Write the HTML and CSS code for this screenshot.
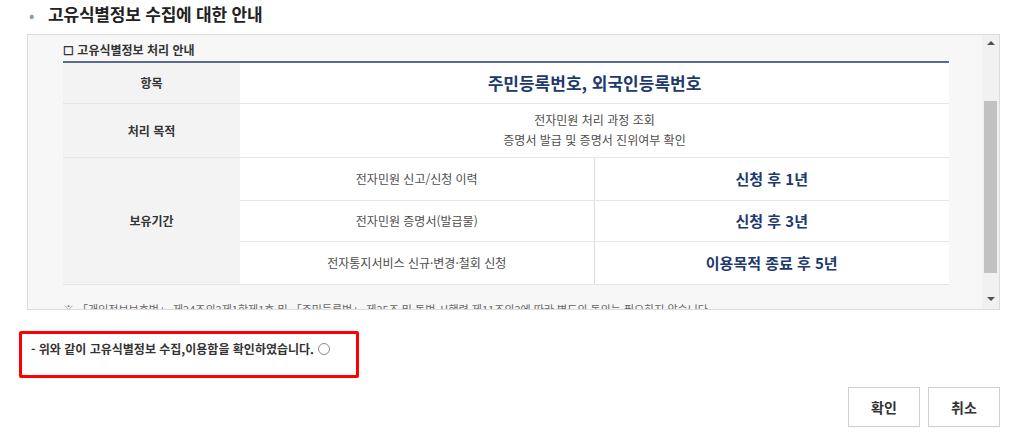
FILE: index.html
```html
<!DOCTYPE html>
<html lang="ko">
<head>
<meta charset="utf-8">
<title>고유식별정보 수집에 대한 안내</title>
<link rel="stylesheet" href="styles.css">
</head>
<body>
<div class="page">
  <h2 class="title"><span class="dot">•</span>고유식별정보 수집에 대한 안내</h2>

  <div class="box">
    <div class="box-content">
      <h3 class="sub">☐ 고유식별정보 처리 안내</h3>
      <table class="info">
        <colgroup>
          <col class="c1"><col class="c2"><col class="c3">
        </colgroup>
        <tr class="r1">
          <th>항목</th>
          <td colspan="2" class="strong big">주민등록번호, 외국인등록번호</td>
        </tr>
        <tr class="r2">
          <th>처리 목적</th>
          <td colspan="2" class="plain">전자민원 처리 과정 조회<br>증명서 발급 및 증명서 진위여부 확인</td>
        </tr>
        <tr class="r3">
          <th rowspan="3">보유기간</th>
          <td class="plain sep">전자민원 신고/신청 이력</td>
          <td class="strong">신청 후 1년</td>
        </tr>
        <tr class="r4">
          <td class="plain sep">전자민원 증명서(발급물)</td>
          <td class="strong">신청 후 3년</td>
        </tr>
        <tr class="r5">
          <td class="plain sep">전자통지서비스 신규·변경·철회 신청</td>
          <td class="strong">이용목적 종료 후 5년</td>
        </tr>
      </table>
      <p class="note">※ 「개인정보보호법」 제24조의2제1항제1호 및 「주민등록법」 제25조 및 동법 시행령 제11조의2에 따라 별도의 동의는 필요하지 않습니다.</p>
    </div>
    <div class="scrollbar">
      <span class="arrow up"></span>
      <span class="thumb"></span>
      <span class="arrow down"></span>
    </div>
  </div>

  <div class="confirm">
    <label class="confirm-label">- 위와 같이 고유식별정보 수집,이용함을 확인하였습니다. <span class="radio"></span></label>
  </div>

  <div class="buttons">
    <button class="btn">확인</button>
    <button class="btn">취소</button>
  </div>
</div>
</body>
</html>
```

FILE: styles.css
```css
* { box-sizing: border-box; }
html, body { margin: 0; padding: 0; background: #fff; }
body {
  font-family: "Noto Sans CJK KR", "Noto Sans", sans-serif;
  color: #333;
  width: 1024px;
  height: 435px;
  overflow: hidden;
}
.page { padding: 0; }

.title {
  margin: 0;
  padding: 2px 0 0 29px;
  height: 34px;
  font-size: 17px;
  font-weight: 700;
  line-height: 24px;
  color: #222;
  letter-spacing: -0.2px;
}
.title .dot {
  display: inline-block;
  width: 19px;
  color: #8a9bb8;
  font-size: 14px;
}

.box {
  margin-left: 27px;
  width: 973px;
  height: 276px;
  border: 1px solid #dcdcdc;
  background: #f7f7f7;
  display: flex;
}
.box-content {
  flex: 1;
  overflow: hidden;
  padding: 6px 33px 0 35px;
}
.sub {
  margin: 0;
  font-size: 12px;
  font-weight: 700;
  color: #333;
  line-height: 18px;
  height: 20px;
}
.info {
  width: 886px;
  border-collapse: collapse;
  table-layout: fixed;
  border-top: 2px solid #5b6b8c;
  border-bottom: 1px solid #c4c4c4;
}
.info col.c1 { width: 177px; }
.info col.c2 { width: 354px; }
.info col.c3 { width: 355px; }
.info th {
  background: #f3f3f3;
  font-size: 12px;
  font-weight: 700;
  color: #333;
  text-align: center;
  border-bottom: 1px solid #e6e6e6;
}
.info td {
  background: #fff;
  text-align: center;
  border-bottom: 1px solid #e6e6e6;
}
.info td.strong {
  font-size: 15px;
  font-weight: 700;
  color: #1d3a6f;
}
.info td.strong.big { font-size: 17px; }
.info td.plain {
  font-size: 12px;
  color: #4d4d4d;
  line-height: 20px;
}
.info td.sep { border-right: 1px solid #dedede; }
.info .r1 { height: 41px; }
.info .r2 { height: 54px; }
.info .r3 { height: 43px; }
.info .r4 { height: 41px; }
.info .r5 { height: 43px; }

.note {
  margin: 17px 0 0 0;
  font-size: 11px;
  color: #666;
  white-space: nowrap;
  line-height: 14px;
}

.scrollbar {
  width: 17px;
  background: #f1f1f1;
  display: flex;
  flex-direction: column;
  align-items: center;
}
.arrow {
  width: 0;
  height: 0;
  border-left: 4px solid transparent;
  border-right: 4px solid transparent;
}
.arrow.up {
  margin-top: 6px;
  border-bottom: 4px solid #505050;
}
.arrow.down {
  margin-top: 24px;
  border-top: 4px solid #505050;
}
.thumb {
  margin-top: 56px;
  width: 13px;
  height: 172px;
  background: #c1c1c1;
}

.confirm {
  margin: 21px 0 0 19px;
  width: 340px;
  height: 47px;
  border: 3px solid #ff0000;
  border-radius: 2px;
  padding: 6px 0 0 9px;
}
.confirm-label {
  font-size: 12px;
  font-weight: 700;
  color: #333;
  line-height: 18px;
  display: flex;
  align-items: center;
  gap: 4px;
}
.radio {
  display: inline-block;
  width: 12px;
  height: 12px;
  border: 1px solid #8a8a8a;
  border-radius: 50%;
  background: #fff;
}

.buttons {
  margin-top: 9px;
  padding-right: 24px;
  display: flex;
  justify-content: flex-end;
  gap: 8px;
}
.btn {
  width: 72px;
  height: 40px;
  background: #fff;
  border: 1px solid #cfcfcf;
  font-family: "Noto Sans CJK KR", "Noto Sans", sans-serif;
  font-size: 14px;
  font-weight: 700;
  color: #333;
  padding: 0;
}
```
